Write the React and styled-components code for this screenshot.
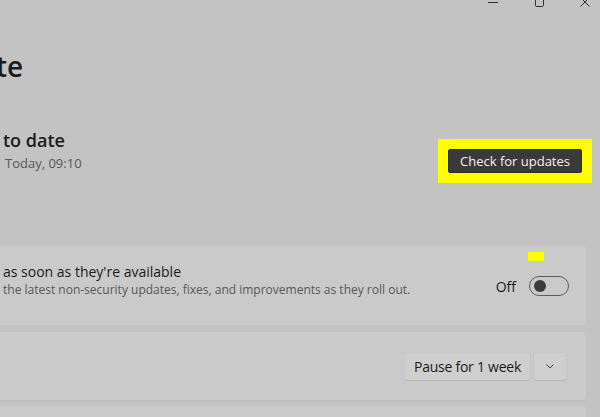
import React from 'react';
import styled, {createGlobalStyle} from 'styled-components';

const GlobalStyle = createGlobalStyle`
  body {
    margin: 0;
    background: #c3c3c3;
    color: #1b1b1b;
    font-family: "Open Sans", "Noto Sans", sans-serif;
    overflow: hidden;
  }
`

const Page = styled.div`
  display: flex;
  flex-direction: column;
  width: 600px;
  height: 417px;
  overflow: hidden;

  & > * {
    flex-shrink: 0;
  }
`

const TitleBar = styled.div`
  display: flex;
  justify-content: flex-end;
  height: 8px;
  margin-right: -8px;
  overflow: hidden;
`

const Control = styled.div`
  display: flex;
  align-items: center;
  justify-content: center;
  width: 46px;
  height: 4px;
  color: #303030;
`

const Heading = styled.h1`
  margin: 40px 0 0 -4px;
  font-size: 28px;
  line-height: 36px;
  font-weight: 600;
`

const StatusRow = styled.div`
  display: flex;
  align-items: flex-start;
  justify-content: space-between;
  margin-top: 44px;
  padding: 0 8px 0 3px;
`

const StatusText = styled.div`
  display: flex;
  flex-direction: column;
`

const StatusTitle = styled.div`
  font-size: 18px;
  line-height: 24px;
  font-weight: 600;
`

const StatusSub = styled.div`
  margin-top: 1px;
  padding-left: 2px;
  font-size: 13px;
  line-height: 20px;
  color: #585858;
`

const Highlight = styled.div`
  margin-top: 11px;
  padding: 10px;
  background: #ffff00;
`

const DarkButton = styled.button`
  display: block;
  height: 24px;
  width: 134px;
  padding: 0;
  border: 1px solid #2c2c2c;
  border-radius: 2px;
  background: #3a3a3a;
  color: #f2f2f2;
  font-family: inherit;
  font-size: 13px;
`

const CardList = styled.div`
  display: flex;
  flex-direction: column;
  gap: 5px;
  margin: 63px 14px 0 -20px;
`

const Card = styled.div`
  position: relative;
  display: flex;
  align-items: center;
  justify-content: space-between;
  height: ${p => p.$height}px;
  padding: 0 17px 0 23px;
  background: #cacaca;
  border-radius: 4px;
  border-bottom: 1px solid #bdbdbd;
`

const CardText = styled.div`
  display: flex;
  flex-direction: column;
  padding-bottom: 12px;
`

const CardTitle = styled.div`
  font-size: 14px;
  line-height: 20px;
`

const CardSub = styled.div`
  font-size: 12px;
  line-height: 16px;
  color: #585858;
`

const Controls = styled.div`
  display: flex;
  align-items: center;
  gap: 13px;
`

const Label = styled.span`
  font-size: 14px;
`

const Toggle = styled.div`
  display: flex;
  align-items: center;
  width: 40px;
  height: 20px;
  padding: 0 4px;
  box-sizing: border-box;
  border: 1px solid #5c5c5c;
  border-radius: 11px;
`

const Knob = styled.div`
  width: 12px;
  height: 12px;
  border-radius: 50%;
  background: #3c3c3c;
`

const Marker = styled.div`
  position: absolute;
  top: 6px;
  right: 42px;
  width: 16px;
  height: 9px;
  background: #ffff00;
`

const Split = styled.div`
  display: flex;
  gap: 2px;
  margin-right: 2px;
`

const SplitPart = styled.button`
  display: flex;
  align-items: center;
  justify-content: center;
  height: 29px;
  width: ${p => p.$width}px;
  padding: 0;
  border: 1px solid #c6c6c6;
  border-bottom-color: #b8b8b8;
  border-radius: 4px;
  background: #cfcfcf;
  color: #1b1b1b;
  font-family: inherit;
  font-size: 14px;
  letter-spacing: -0.25px;
`

const App = () => {
  return (
    <Page>
      <GlobalStyle/>
      <TitleBar>
        <Control>
          <svg width="10" height="10" viewBox="0 0 10 10" fill="none" stroke="currentColor" strokeWidth="1">
            <path d="M0 5.5h10"/>
          </svg>
        </Control>
        <Control>
          <svg width="10" height="10" viewBox="0 0 10 10" fill="none" stroke="currentColor" strokeWidth="1">
            <rect x="1.5" y="0.5" width="8" height="9" rx="1.2"/>
          </svg>
        </Control>
        <Control>
          <svg width="10" height="10" viewBox="0 0 10 10" fill="none" stroke="currentColor" strokeWidth="1">
            <path d="M0.5 0.5l9 9M9.5 0.5l-9 9"/>
          </svg>
        </Control>
      </TitleBar>

      <Heading>te</Heading>

      <StatusRow>
        <StatusText>
          <StatusTitle>to date</StatusTitle>
          <StatusSub>Today, 09:10</StatusSub>
        </StatusText>
        <Highlight>
          <DarkButton>Check for updates</DarkButton>
        </Highlight>
      </StatusRow>

      <CardList>
        <Card $height={80}>
          <CardText>
            <CardTitle>as soon as they're available</CardTitle>
            <CardSub>the latest non-security updates, fixes, and improvements as they roll out.</CardSub>
          </CardText>
          <Controls>
            <Label>Off</Label>
            <Toggle><Knob/></Toggle>
          </Controls>
          <Marker/>
        </Card>
        <Card $height={68}>
          <div/>
          <Split>
            <SplitPart $width={127}>Pause for 1 week</SplitPart>
            <SplitPart $width={34}>
              <svg width="8" height="5" viewBox="0 0 8 5" fill="none" stroke="#444" strokeWidth="1">
                <path d="M0.5 0.5l3.5 3.5 3.5-3.5"/>
              </svg>
            </SplitPart>
          </Split>
        </Card>
        <Card $height={60}/>
      </CardList>
    </Page>
  );
};

export default App;
